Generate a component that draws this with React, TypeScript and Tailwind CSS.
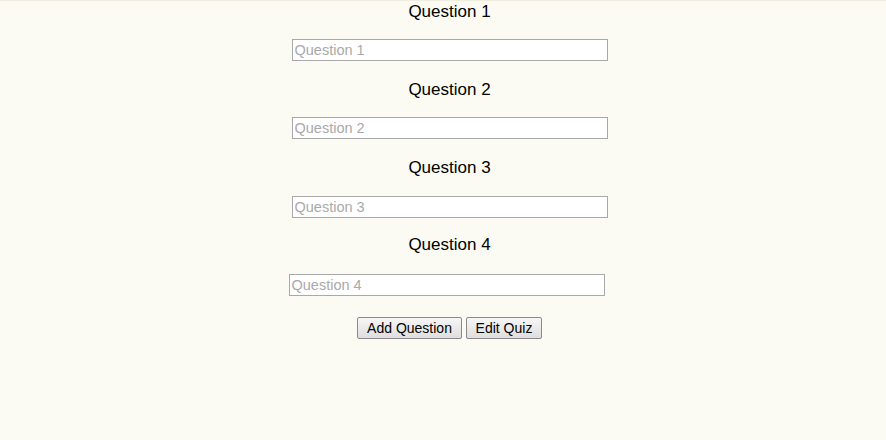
import React from "react";

export default function App() {
  const font = { fontFamily: '"Liberation Sans", Arial, sans-serif' };
  return (
    <div
      className="w-[886px] h-[440px] bg-[#fbfbf3] border-t border-[#efece0] flex flex-col items-center pl-[13px] text-black"
      style={font}
    >
      <div className="mt-[1px] h-[20px] leading-[20px] text-[17px]">Question 1</div>
      <input
        placeholder="Question 1"
        className="mt-[17px] w-[316px] h-[22px] bg-white border border-[#a9a9a9] px-[2px] text-[14.5px] placeholder:text-[#a9a9a9] outline-none"
      />
      <div className="mt-[19px] h-[20px] leading-[20px] text-[17px]">Question 2</div>
      <input
        placeholder="Question 2"
        className="mt-[17px] w-[316px] h-[22px] bg-white border border-[#a9a9a9] px-[2px] text-[14.5px] placeholder:text-[#a9a9a9] outline-none"
      />
      <div className="mt-[19px] h-[20px] leading-[20px] text-[17px]">Question 3</div>
      <input
        placeholder="Question 3"
        className="mt-[18px] w-[316px] h-[22px] bg-white border border-[#a9a9a9] px-[2px] text-[14.5px] placeholder:text-[#a9a9a9] outline-none"
      />
      <div className="mt-[17px] h-[20px] leading-[20px] text-[17px]">Question 4</div>
      <input
        placeholder="Question 4"
        className="mt-[19px] mr-[6px] w-[316px] h-[22px] bg-white border border-[#a9a9a9] px-[2px] text-[14.5px] placeholder:text-[#a9a9a9] outline-none"
      />
      <div className="mt-[21px] flex gap-[4px]">
        <button className="w-[105px] h-[22px] text-[14px] leading-[20px] border border-[#8a8a8a] rounded-[2px] bg-gradient-to-b from-[#f6f6f6] to-[#dedede]">
          Add Question
        </button>
        <button className="w-[76px] h-[22px] text-[14px] leading-[20px] border border-[#8a8a8a] rounded-[2px] bg-gradient-to-b from-[#f6f6f6] to-[#dedede]">
          Edit Quiz
        </button>
      </div>
    </div>
  );
}
